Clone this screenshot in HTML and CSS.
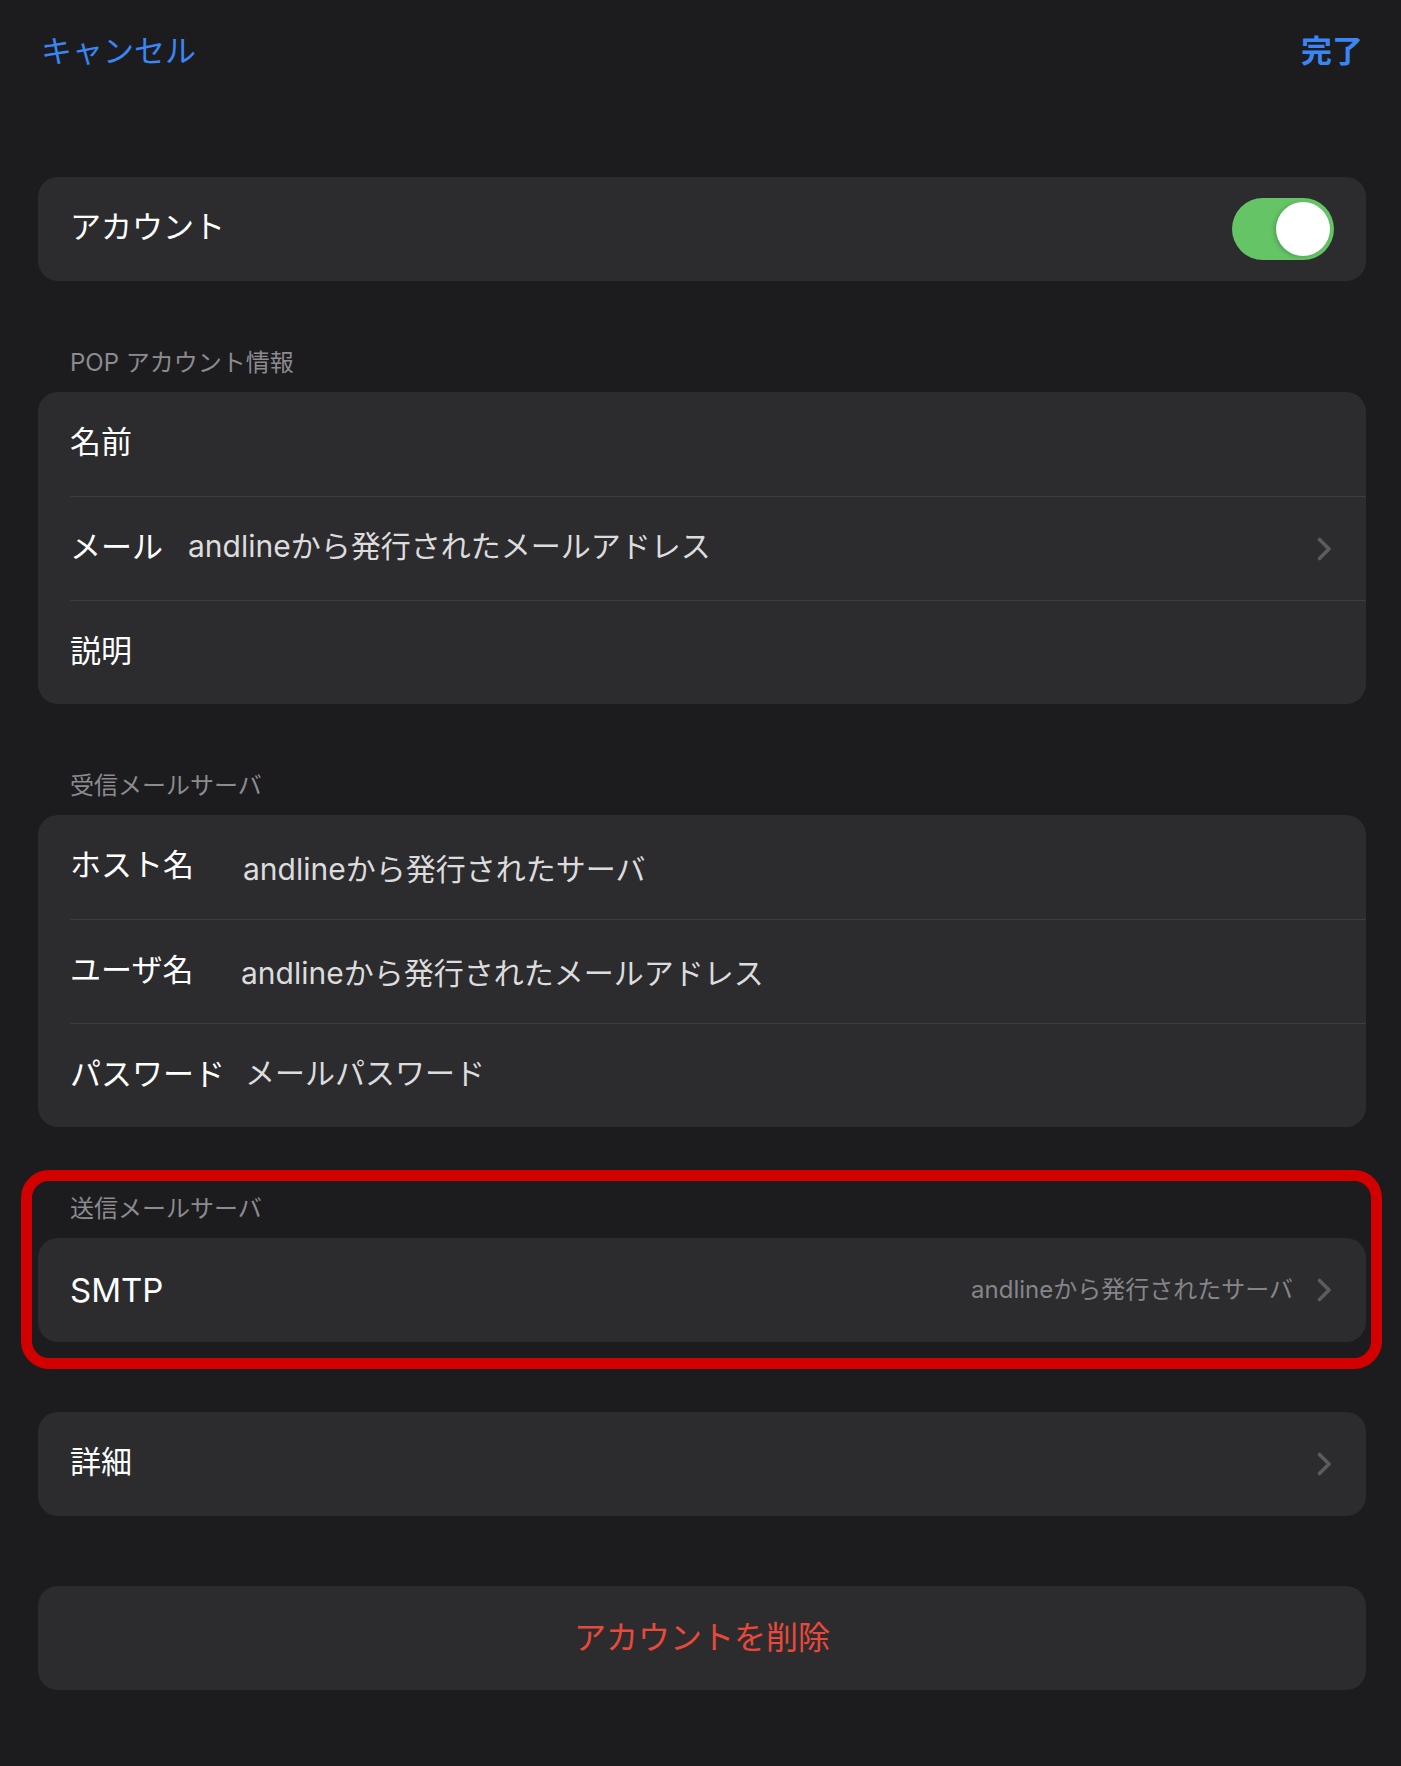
FILE: index.html
```html
<!DOCTYPE html>
<html lang="ja">
<head>
<meta charset="utf-8">
<title>アカウント</title>
<link rel="stylesheet" href="styles.css">
</head>
<body>
<div class="page">
  <header class="nav">
    <span class="nav-btn">キャンセル</span>
    <span class="nav-btn nav-btn--done">完了</span>
  </header>

  <section class="group group--first">
    <div class="card">
      <div class="row">
        <span class="label">アカウント</span>
        <span class="toggle"><span class="knob"></span></span>
      </div>
    </div>
  </section>

  <section class="group group--titled">
    <div class="group-title">POP アカウント情報</div>
    <div class="card">
      <div class="row"><span class="label">名前</span></div>
      <div class="row">
        <span class="label label--w1">メール</span>
        <span class="value">andlineから発行されたメールアドレス</span>
        <svg class="chev" width="15" height="24" viewBox="0 0 15 24"><polyline points="2.5,2.5 12,12 2.5,21.5" fill="none" stroke="#5c5c60" stroke-width="3.6" stroke-linecap="round" stroke-linejoin="round"/></svg>
      </div>
      <div class="row"><span class="label">説明</span></div>
    </div>
  </section>

  <section class="group group--titled">
    <div class="group-title">受信メールサーバ</div>
    <div class="card">
      <div class="row">
        <span class="label label--w2">ホスト名</span>
        <span class="value value--low">andlineから発行されたサーバ</span>
      </div>
      <div class="row">
        <span class="label label--w2b">ユーザ名</span>
        <span class="value value--low">andlineから発行されたメールアドレス</span>
      </div>
      <div class="row">
        <span class="label label--w2c">パスワード</span>
        <span class="value">メールパスワード</span>
      </div>
    </div>
  </section>

  <section class="group group--titled group--marked">
    <div class="group-title">送信メールサーバ</div>
    <div class="card">
      <div class="row">
        <span class="label label--latin">SMTP</span>
        <span class="detail">andlineから発行されたサーバ</span>
        <svg class="chev" width="15" height="24" viewBox="0 0 15 24"><polyline points="2.5,2.5 12,12 2.5,21.5" fill="none" stroke="#5c5c60" stroke-width="3.6" stroke-linecap="round" stroke-linejoin="round"/></svg>
      </div>
    </div>
    <div class="mark"></div>
  </section>

  <section class="group group--plain">
    <div class="card">
      <div class="row">
        <span class="label">詳細</span>
        <svg class="chev chev--push" width="15" height="24" viewBox="0 0 15 24"><polyline points="2.5,2.5 12,12 2.5,21.5" fill="none" stroke="#5c5c60" stroke-width="3.6" stroke-linecap="round" stroke-linejoin="round"/></svg>
      </div>
    </div>
  </section>

  <section class="group group--plain">
    <div class="card">
      <div class="row row--center">
        <span class="danger">アカウントを削除</span>
      </div>
    </div>
  </section>
</div>
</body>
</html>
```

FILE: styles.css
```css
html {
  background: #1c1c1e;
}
body {
  margin: 0;
  background: #1c1c1e;
  font-family: "Inter", "Noto Sans CJK JP", sans-serif;
  color: #ffffff;
  min-height: 1766px;
}
.page {
  padding: 0 35px 0 38px;
}
.nav {
  display: flex;
  justify-content: space-between;
  padding: 31px 0 0 3px;
  margin-right: 3px;
  height: 40px;
}
.nav-btn {
  font-size: 31px;
  line-height: 40px;
  color: #3a86f4;
}
.nav-btn--done {
  font-weight: 700;
}
.group--first {
  margin-top: 106px;
}
.group--titled {
  margin-top: 67px;
}
.group--plain {
  margin-top: 70px;
}
.group-title {
  font-size: 24px;
  line-height: 30px;
  color: #8b8b90;
  padding-left: 32px;
  margin-bottom: 14px;
}
.card {
  background: #2c2c2e;
  border-radius: 20px;
  overflow: hidden;
}
.row {
  box-sizing: border-box;
  height: 104px;
  margin-left: 32px;
  padding-right: 34px;
  display: flex;
  align-items: center;
  font-size: 31px;
}
.row + .row {
  border-top: 1px solid #3d3d41;
}
.row--center {
  margin-left: 0;
  padding-right: 0;
  justify-content: center;
}
.label {
  color: #ffffff;
  flex: none;
  padding-bottom: 9px;
}
.label--w1 {
  width: 118px;
}
.label--w2 {
  width: 173px;
}
.label--w2b {
  width: 171px;
}
.label--w2c {
  width: 175px;
}
.label--latin {
  font-size: 33px;
  font-family: "Inter", sans-serif;
  padding-bottom: 0;
}
.value {
  color: #dcdcde;
  flex: 1;
  font-size: 30px;
  padding-bottom: 9px;
}
.value--low {
  padding-top: 8px;
}
.detail {
  margin-left: auto;
  font-size: 24px;
  color: #85858a;
  margin-right: 24px;
  padding-bottom: 5px;
}
.chev {
  flex: none;
  display: block;
}
.chev--push {
  margin-left: auto;
}
.toggle {
  margin-left: auto;
  margin-right: -2px;
  width: 102px;
  height: 62px;
  border-radius: 31px;
  background: #65c466;
  display: flex;
  align-items: center;
  justify-content: flex-end;
  padding: 0 4px;
  box-sizing: border-box;
}
.knob {
  width: 54px;
  height: 54px;
  border-radius: 50%;
  background: #ffffff;
  box-shadow: -2px 1px 4px rgba(0, 0, 0, 0.18);
}
.danger {
  color: #e9493b;
  font-size: 32px;
  padding-bottom: 7px;
}
.group--marked {
  position: relative;
}
.mark {
  position: absolute;
  left: -17px;
  right: -16px;
  top: -24px;
  bottom: -27px;
  border: 11px solid #d30000;
  border-radius: 28px;
  pointer-events: none;
}
```
